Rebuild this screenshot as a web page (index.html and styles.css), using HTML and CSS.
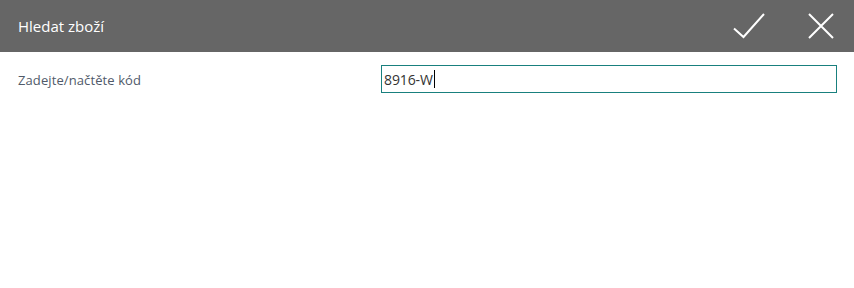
FILE: index.html
```html
<!DOCTYPE html>
<html lang="cs">
<head>
<meta charset="utf-8">
<title>Hledat zboží</title>
<link rel="stylesheet" href="styles.css">
</head>
<body>
<header class="bar">
  <h1 class="title">Hledat zboží</h1>
  <div class="actions">
    <button class="icon-btn" aria-label="Potvrdit">
      <svg width="32" height="26" viewBox="0 0 32 26"><path d="M1 15.5 L10.5 24 L31 1" fill="none" stroke="#fff" stroke-width="2"/></svg>
    </button>
    <button class="icon-btn" aria-label="Zavřít">
      <svg width="26" height="26" viewBox="0 0 26 26"><path d="M1 1 L25 25 M25 1 L1 25" fill="none" stroke="#fff" stroke-width="2"/></svg>
    </button>
  </div>
</header>
<main class="content">
  <div class="row">
    <label class="label">Zadejte/načtěte kód</label>
    <div class="field"><span class="value">8916-W</span><span class="caret"></span></div>
  </div>
</main>
</body>
</html>
```

FILE: styles.css
```css
html, body {
  margin: 0;
  padding: 0;
  background: #fff;
  font-family: "Open Sans", "Noto Sans", sans-serif;
}
.bar {
  height: 52px;
  background: #666666;
  display: flex;
  align-items: center;
  justify-content: space-between;
  padding: 0 20px 0 18px;
}
.title {
  margin: 0;
  font-size: 15px;
  font-weight: 500;
  color: #fff;
  letter-spacing: 0;
}
.actions {
  display: flex;
  align-items: center;
  gap: 43px;
}
.icon-btn {
  background: none;
  border: 0;
  padding: 0;
  display: flex;
  cursor: pointer;
}
.content {
  padding: 13px 17px 0 18px;
}
.row {
  display: flex;
  align-items: center;
}
.label {
  width: 363px;
  font-size: 13px;
  color: #505a69;
  letter-spacing: 0.1px;
  padding-top: 2px;
}
.field {
  width: 452px;
  height: 26px;
  border: 1px solid #19807e;
  display: flex;
  align-items: center;
  padding-left: 2px;
  font-size: 14px;
  color: #333;
}
.value {
  letter-spacing: -0.1px;
}
.caret {
  width: 1px;
  height: 18px;
  background: #000;
  margin-left: 1px;
}
```
